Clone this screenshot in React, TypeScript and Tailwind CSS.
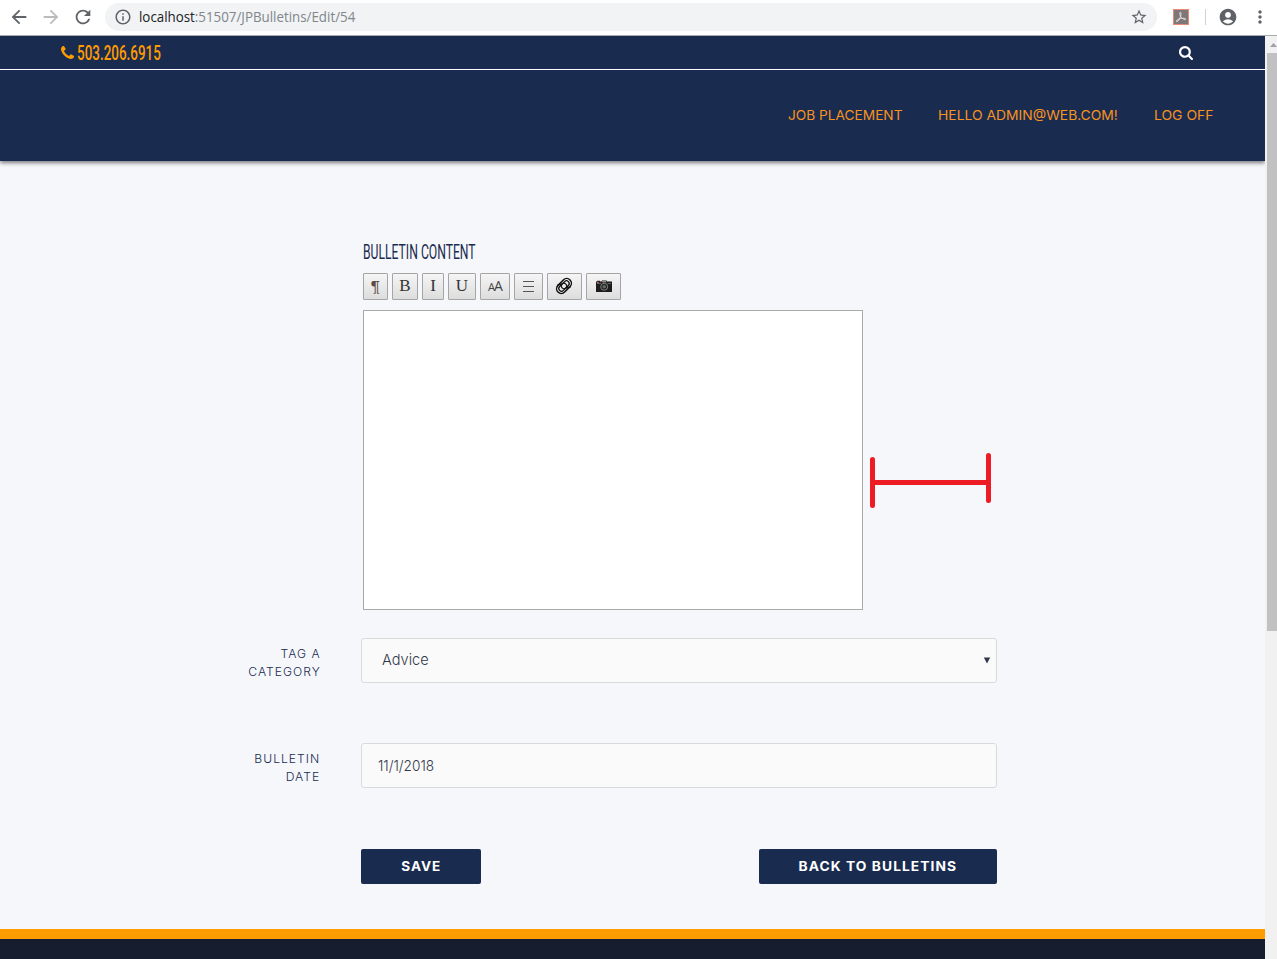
import type { ReactNode } from "react";
import {
  MdAccountCircle,
  MdArrowBack,
  MdArrowForward,
  MdInfoOutline,
  MdMoreVert,
  MdRefresh,
  MdStarBorder,
} from "react-icons/md";

function PhoneIcon() {
  return (
    <svg viewBox="0 0 1408 1408" className="h-[13px] w-[13px] shrink-0 fill-current">
      <path
        transform="translate(0 -128)"
        d="M1408 1240q0 27-10 70.5t-21 68.5q-21 50-122 106-94 51-186 51-27 0-53-3.5t-57.5-12.5-47-14.5-55.5-20.5-49-18q-98-35-175-83-127-79-264-216t-216-264q-48-77-83-175-3-9-18-49t-20.5-55.5-14.5-47-12.5-57.5-3.5-53q0-92 51-186 56-101 106-122 25-11 68.5-21t70.5-10q14 0 21 3 18 6 53 76 11 19 30 54t35 63.5 31 53.5q3 4 17.5 25t21.5 35.5 7 28.5q0 20-28.5 50t-62 55-62 53-28.5 46q0 9 5 22.5t8.5 20.5 14 24 11.5 19q76 137 174 235t235 174q2 1 19 11.5t24 14 20.5 8.5 22.5 5q18 0 46-28.5t53-62 55-62 50-28.5q14 0 28.5 7t35.5 21.5 25 17.5q25 15 53.5 31t63.5 35 54 30q70 35 76 53 3 7 3 21z"
      />
    </svg>
  );
}

function SearchIcon() {
  return (
    <svg viewBox="0 0 1664 1664" className="mt-px h-[14px] w-[14px] fill-white">
      <path
        transform="translate(0 -128)"
        d="M1152 832q0-185-131.500-316.500t-316.500-131.500-316.500 131.500-131.500 316.500 131.500 316.500 316.500 131.500 316.500-131.500 131.500-316.500zm512 832q0 52-38 90t-90 38q-54 0-90-38l-343-342q-179 124-399 124-143 0-273.500-55.500t-225-150-150-225-55.500-273.500 55.500-273.500 150-225 225-150 273.500-55.500 273.500 55.500 225 150 150 225 55.500 273.500q0 220-124 399l343 343q37 37 37 90z"
      />
    </svg>
  );
}

function AcrobatIcon() {
  return (
    <svg viewBox="0 0 16 16" className="h-4 w-4">
      <rect x="0.5" y="0.5" width="15" height="15" fill="#7d7778" stroke="#ec8877" />
      <path
        d="M7.300 3.200c1.200 0 .8 2.500.2 4.300-.7 2-2.300 5.200-3.800 5.200-1.500-.2.500-2.200 3-2.900 2.400-.7 6-.9 6 .4 0 1.200-3-.2-4.400-1.700C7 7 6.200 3.200 7.300 3.200z"
        fill="none"
        stroke="#e6e1e1"
        strokeWidth="1"
      />
    </svg>
  );
}

function PaperclipsIcon() {
  return (
    <svg viewBox="0 0 18 18" className="mr-px mb-px h-[18px] w-[18px]">
      <g transform="rotate(-45 9 9)" fill="none">
        <rect x="0.500" y="4.300" width="17" height="9.400" rx="4.700" stroke="#111" strokeWidth="1.500" />
        <rect x="2.800" y="6.300" width="12.400" height="5.400" rx="2.700" stroke="#111" strokeWidth="1.300" />
        <circle cx="9" cy="9" r="2.700" stroke="#111" strokeWidth="1.200" />
        <path d="M5 3.800 L9 6M9 12l4 2.200" stroke="#111" strokeWidth="1.500" />
      </g>
    </svg>
  );
}

function CameraIcon() {
  return (
    <svg viewBox="0 0 16 12" className="h-3 w-4">
      <path d="M0 1.500h1V.8h3v.7h1.500L6 .5h4.500l.5 1h5V12H0z" fill="#1c1c1c" />
      <path d="M1 3.500h4M11.500 3.500H15" stroke="#777" strokeWidth="0.800" />
      <rect x="1" y="1.800" width="1.700" height="1.200" fill="#e26a5c" />
      <rect x="6.200" y="1.200" width="4" height="1.200" fill="#aaa" />
      <circle cx="8.200" cy="6.800" r="3.500" fill="#222" stroke="#999" strokeWidth="0.800" />
      <circle cx="8.200" cy="6.800" r="1.800" fill="#666" />
    </svg>
  );
}

function BrowserBar() {
  return (
    <div className="flex h-9 items-start border-b border-[#a9a9ab] bg-white pt-[3px] text-[#5f6368]">
      <div className="flex h-7 w-[105px] items-center gap-[10px] pl-[8px]">
        <MdArrowBack size={22} />
        <MdArrowForward size={22} className="text-[#babcbe]" />
        <MdRefresh size={22} />
      </div>
      <div className="flex h-7 w-[1052px] items-center rounded-full bg-[#f1f3f4] pr-[9px] pl-[9px]">
        <MdInfoOutline size={18} />
        <div className="ml-[7px] flex-1">
          <span className="inline-block origin-left scale-x-[0.952] font-['Open_Sans',sans-serif] text-[14px] leading-7 whitespace-nowrap text-[#80868b]">
            <span className="text-[#202124]">localhost</span>:51507/JPBulletins/Edit/54
          </span>
        </div>
        <MdStarBorder size={18} />
      </div>
      <div className="flex h-7 flex-1 items-center pl-4">
        <AcrobatIcon />
        <div className="ml-4 h-4 w-px bg-[#d0d1d3]" />
        <MdAccountCircle size={20} className="ml-3" />
        <MdMoreVert size={20} className="ml-[12px] shrink-0" />
      </div>
    </div>
  );
}

function SiteHeader() {
  const link =
    "block h-5 font-['Inter',sans-serif] text-[13px] leading-5 text-[#f7931e]";
  return (
    <header className="bg-[#1a2b50] shadow-[0_2px_4px_rgba(0,0,0,0.5)]">
      <div className="flex h-[34px] items-center justify-between border-b border-white pr-[72px] pl-[61px]">
        <div className="flex items-center gap-[3px] text-[#ff9c00]">
          <PhoneIcon />
          <span className="block w-[84px] origin-left scale-x-[0.672] font-['Roboto',sans-serif] text-[20px] leading-8 font-medium whitespace-nowrap">
            503.206.6915
          </span>
        </div>
        <SearchIcon />
      </div>
      <nav className="flex h-[91px] items-center gap-9 pb-px pl-[788px]">
        <a className={link + " w-[114px]"}>
          <span className="inline-block origin-left scale-x-[1.053] whitespace-nowrap">JOB PLACEMENT</span>
        </a>
        <a className={link + " w-[180px]"}>
          <span className="inline-block origin-left scale-x-[1.067] whitespace-nowrap">HELLO ADMIN@WEB.COM!</span>
        </a>
        <a className={link + " w-[60px]"}>
          <span className="inline-block origin-left scale-x-[1.07] whitespace-nowrap">LOG OFF</span>
        </a>
      </nav>
    </header>
  );
}

function ToolButton({ width, children }: { width: string; children: ReactNode }) {
  return (
    <button
      className={
        "flex h-[27px] items-center justify-center rounded-[1px] border border-[#a5a5a5] bg-linear-to-b from-[#f5f5f5] to-[#dddddd] pb-px font-['Noto_Serif','DejaVu_Serif','Liberation_Serif',serif] text-[15px] leading-none text-[#333] " +
        width
      }
    >
      {children}
    </button>
  );
}

function Toolbar() {
  const letter = "inline-block pb-px font-['Liberation_Serif',serif] text-[17px]";
  return (
    <div className="flex gap-1">
      <ToolButton width="w-[25px]">
        <span className="text-[#5a4a42]">¶</span>
      </ToolButton>
      <ToolButton width="w-[26px]">
        <span className={letter}>B</span>
      </ToolButton>
      <ToolButton width="w-[22px]">
        <span className={letter}>I</span>
      </ToolButton>
      <ToolButton width="w-[28px]">
        <span className={letter}>U</span>
      </ToolButton>
      <ToolButton width="w-[30px]">
        <span className="flex items-baseline font-['Open_Sans',sans-serif] tracking-[-1px] text-[#444]">
          <span className="text-[11px]">A</span>
          <span className="text-[14px]">A</span>
        </span>
      </ToolButton>
      <ToolButton width="w-[29px]">
        <span className="flex w-[11px] flex-col gap-1">
          <span className="h-px bg-[#555]" />
          <span className="h-px bg-[#555]" />
          <span className="h-px bg-[#555]" />
        </span>
      </ToolButton>
      <ToolButton width="w-[35px]">
        <PaperclipsIcon />
      </ToolButton>
      <ToolButton width="w-[35px]">
        <CameraIcon />
      </ToolButton>
    </div>
  );
}

function Measure() {
  return (
    <svg viewBox="0 0 122 56" className="mt-[143px] ml-[7px] h-[56px] w-[122px]">
      <path
        d="M2.500 6.500v46M118.500 2.500v45M2.500 29.500h116"
        fill="none"
        stroke="#ed1c24"
        strokeWidth="5"
        strokeLinecap="round"
      />
    </svg>
  );
}

function FieldLabel({ first, second }: { first: string; second: string }) {
  return (
    <label className="flex w-[321px] flex-col items-end pt-[7px] pr-[0.5px] font-['Inter',sans-serif] text-[12px] leading-[18px] font-light tracking-[1px] text-[#1a2b50]">
      <span className="inline-block origin-right scale-x-[1.01]">{first}</span>
      <span className="inline-block origin-right scale-x-[1.01]">{second}</span>
    </label>
  );
}

function EditForm() {
  const field =
    "flex h-[45px] w-[636px] items-center rounded-[3px] border border-[#d9dadb] bg-[#fafafa] font-['Inter',sans-serif] text-[15px] font-light text-[#32384a]";
  const button =
    "flex h-[35px] items-center justify-center rounded-[2px] bg-[#1a2b50] font-['Inter',sans-serif] text-[13px] font-bold tracking-[1px] text-white";
  return (
    <main className="flex h-[768px] flex-col">
      <section className="pt-[80px] pl-[363px]">
        <h2 className="mb-[8px] h-6 font-['Roboto',sans-serif] text-[19.500px] leading-6 font-normal text-[#1a2b50]">
          <span className="inline-block origin-left scale-x-[0.624] whitespace-nowrap">BULLETIN CONTENT</span>
        </h2>
        <Toolbar />
        <div className="mt-[10px] flex">
          <div className="h-[300px] w-[500px] border border-[#a9a9a9] bg-white" />
          <Measure />
        </div>
      </section>
      <div className="mt-7 flex gap-10">
        <FieldLabel first="TAG A" second="CATEGORY" />
        <div className={field + " justify-between pr-[5px] pl-5"}>
          <span className="inline-block origin-left scale-x-[0.97]">Advice</span>
          <svg viewBox="0 0 8 7" className="h-[7px] w-[8px] fill-[#32384a]">
            <path d="M0.800 0.500h6.400L4 6.500z" />
          </svg>
        </div>
      </div>
      <div className="mt-[60px] flex gap-10">
        <FieldLabel first="BULLETIN" second="DATE" />
        <div className={field + " pt-0.5 pl-4"}>
          <span className="inline-block origin-left scale-x-[0.91]">11/1/2018</span>
        </div>
      </div>
      <div className="mt-[61px] flex w-[997px] justify-between pl-[361px]">
        <button className={button + " w-[120px]"}>
          <span className="inline-block scale-x-[1.04]">SAVE</span>
        </button>
        <button className={button + " w-[238px]"}>
          <span className="inline-block scale-x-[1.06] whitespace-nowrap">BACK TO BULLETINS</span>
        </button>
      </div>
    </main>
  );
}

function Scrollbar() {
  return (
    <div className="flex w-3 flex-col items-end overflow-hidden bg-[#f1f1f1]">
      <div className="flex h-[17px] w-full items-center pl-[5px]">
        <svg viewBox="0 0 7 4" className="h-1 w-[7px] fill-[#a0a0a0]">
          <path d="M0 4L3.500 0 7 4z" />
        </svg>
      </div>
      <div className="h-[578px] w-[10px] bg-[#c1c1c1]" />
    </div>
  );
}

export default function App() {
  return (
    <div className="flex h-[959px] w-[1277px] flex-col overflow-hidden bg-[#f5f7fb]">
      <BrowserBar />
      <div className="flex flex-1">
        <div className="flex w-[1265px] flex-col overflow-hidden">
          <SiteHeader />
          <EditForm />
          <footer className="flex-1 border-t-[10px] border-[#ff9c00] bg-[#161d2f]" />
        </div>
        <Scrollbar />
      </div>
    </div>
  );
}
